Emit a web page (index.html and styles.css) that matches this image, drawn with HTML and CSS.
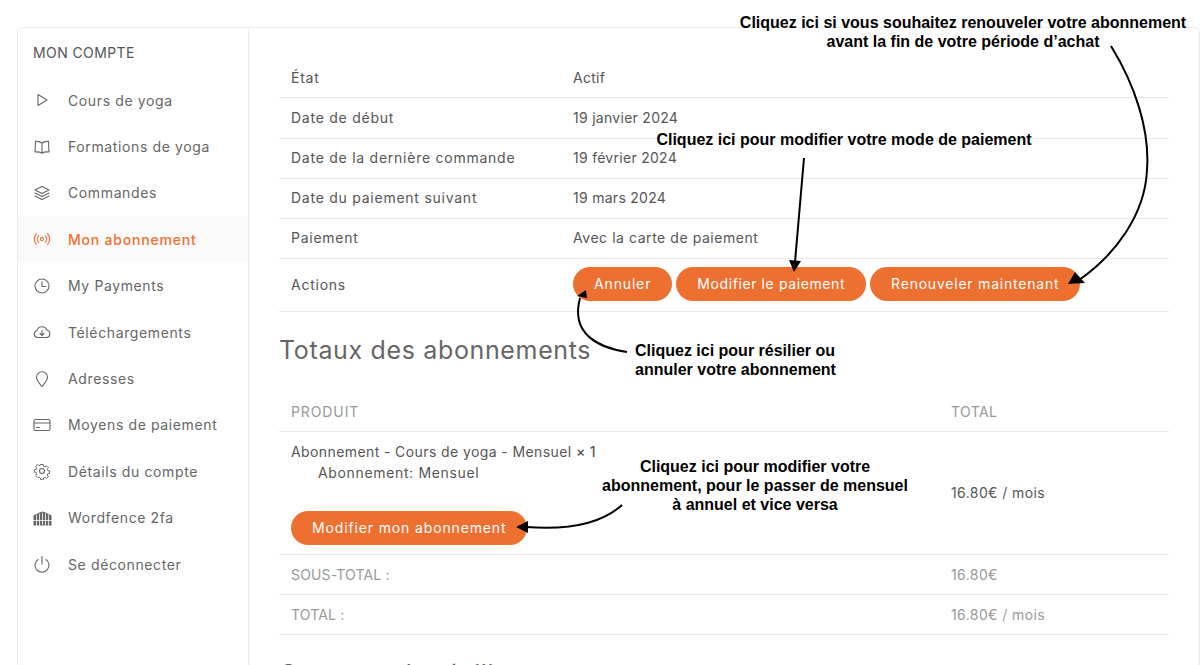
FILE: index.html
```html
<!DOCTYPE html>
<html lang="fr">
<head>
  <meta charset="UTF-8" />
  <title>Mon abonnement</title>
  <link rel="stylesheet" href="styles.css">
</head>
<body>

  <div class="page">
    <div class="account">

      <!-- Sidebar -->
      <aside class="sidebar">
        <h3>MON COMPTE</h3>
        <nav class="menu">
          <a href="#"><svg viewBox="0 0 18 18"><path d="M5 3.500 14 9l-9 5.500z"/></svg>Cours de yoga</a>
          <a href="#"><svg viewBox="0 0 18 18"><path d="M9 5C7.500 3.700 5 3.200 2.500 3.400L2 14c2.600-.3 5.200 0 7 1.200 1.800-1.200 4.400-1.500 7-1.200l-.5-10.600C13 3.200 10.500 3.700 9 5zM9 5v10"/></svg>Formations de yoga</a>
          <a href="#"><svg viewBox="0 0 18 18"><path d="M9 2.500 16 6 9 9.500 2 6zM2 9l7 3.500L16 9M2 12l7 3.500 7-3.500"/></svg>Commandes</a>
          <a href="#" class="active"><svg viewBox="0 0 18 18"><circle cx="9" cy="9" r="1.600"/><path d="M5.800 5.600a5 5 0 0 0 0 6.800M12.200 5.600a5 5 0 0 1 0 6.800M3.400 3.600a8 8 0 0 0 0 10.800M14.600 3.600a8 8 0 0 1 0 10.800"/></svg>Mon abonnement</a>
          <a href="#"><svg viewBox="0 0 18 18"><circle cx="9" cy="9" r="7"/><path d="M9 4.800V9.500h3.600"/></svg>My Payments</a>
          <a href="#"><svg viewBox="0 0 18 18"><path d="M5 14.500H4.500a3.400 3.400 0 0 1-.6-6.700A5.200 5.200 0 0 1 13.800 7a3.800 3.800 0 0 1-.3 7.500zM9 7.500v5M6.900 10.400 9 12.500l2.100-2.100"/></svg>Téléchargements</a>
          <a href="#"><svg viewBox="0 0 18 18"><path d="M9 16.500C6.500 13.500 3.500 10.500 3.500 7.300a5.500 5.500 0 0 1 11 0c0 3.200-3 6.200-5.500 9.200z"/></svg>Adresses</a>
          <a href="#"><svg viewBox="0 0 18 18"><rect x="1" y="3.500" width="16" height="11" rx="1.500"/><path d="M1 7h16M3.500 11.500h3"/></svg>Moyens de paiement</a>
          <a href="#"><svg viewBox="0 0 18 18"><circle cx="9" cy="9" r="2.500"/><path d="M7.600 1.800h2.800l.4 2.100 1.400.6 1.800-1.200 2 2-1.200 1.800.6 1.400 2 .4v2.800l-2 .4-.6 1.400 1.200 1.800-2 2-1.800-1.200-1.400.6-.4 2H7.600l-.4-2-1.400-.6L4 15.900l-2-2 1.200-1.800-.6-1.400-2-.4V7.500l2-.4.600-1.400L2 3.900l2-2 1.800 1.200 1.400-.6z" transform="translate(.9 .9) scale(.9)"/></svg>Détails du compte</a>
          <a href="#"><svg viewBox="0 0 18 18" class="solid"><path d="M0 6.500 3 5l3-1.500L9 2.500l3 1 3 1.500 3 1.500V16.500H0z"/><path class="cut" d="M3 6v10.500M6 5v11.500M9 4v11.500M12 5v11.500M15 6v10.500M0 11.500h18"/></svg>Wordfence 2fa</a>
          <a href="#"><svg viewBox="0 0 18 18"><path d="M9 1.500V9M5 4.500a7 7 0 1 0 8 0"/></svg>Se déconnecter</a>
        </nav>
      </aside>

      <!-- Subscription details -->
      <main class="content">
        <table class="details">
          <tr><td>État</td><td>Actif</td></tr>
          <tr><td>Date de début</td><td>19 janvier 2024</td></tr>
          <tr><td>Date de la dernière commande</td><td>19 février 2024</td></tr>
          <tr><td>Date du paiement suivant</td><td>19 mars 2024</td></tr>
          <tr><td>Paiement</td><td>Avec la carte de paiement</td></tr>
          <tr class="actions">
            <td>Actions</td>
            <td>
              <div class="btn-row">
                <a href="#" class="btn btn-cancel">Annuler</a>
                <a href="#" class="btn btn-pay">Modifier le paiement</a>
                <a href="#" class="btn btn-renew">Renouveler maintenant</a>
              </div>
            </td>
          </tr>
        </table>

        <h2>Totaux des abonnements</h2>

        <table class="totals">
          <thead>
            <tr><th>PRODUIT</th><th>TOTAL</th></tr>
          </thead>
          <tbody>
            <tr class="product">
              <td>
                Abonnement - Cours de yoga - Mensuel <span class="qty">× 1</span>
                <div class="variation">Abonnement: Mensuel</div>
                <a href="#" class="btn btn-change">Modifier mon abonnement</a>
              </td>
              <td>16.80€ / mois</td>
            </tr>
          </tbody>
          <tfoot>
            <tr><th>SOUS-TOTAL :</th><td>16.80€</td></tr>
            <tr><th>TOTAL :</th><td>16.80€ / mois</td></tr>
          </tfoot>
        </table>

        <h2 class="next">Comment le résilier</h2>
      </main>
    </div>

    <!-- Annotations drawn over the page -->
    <svg class="arrows" viewBox="0 0 1200 665">
      <path d="M1111 46C1135 85 1150 130 1147 170 1145 215 1115 255 1079 280"/>
      <path class="head" d="M1068 284 1075 272 1085 283z"/>
      <path d="M804 158 795 262"/>
      <path class="head" d="M794 272 789 260 801 261z"/>
      <path d="M627 352C600 348 570 335 580 298"/>
      <path class="head" d="M586 290 577 296 587 298z"/>
      <path d="M622 505C600 525 565 530 526 527"/>
      <path class="head" d="M516 527 528 521 528 533z"/>
    </svg>
    <p class="note note-renew">Cliquez ici si vous souhaitez renouveler votre abonnement<br>avant la fin de votre période d’achat</p>
    <p class="note note-pay">Cliquez ici pour modifier votre mode de paiement</p>
    <p class="note note-cancel">Cliquez ici pour résilier ou<br>annuler votre abonnement</p>
    <p class="note note-change">Cliquez ici pour modifier votre<br>abonnement, pour le passer de mensuel<br>à annuel et vice versa</p>
  </div>

</body>
</html>
```

FILE: styles.css
```css
/* === Body === */
html, body {
  margin: 0;
  height: 665px;
  overflow: hidden;
  background: #ffffff;
}

body {
  font-family: Inter, 'Open Sans', Arial, sans-serif;
  font-size: 14px;
  color: #555555;
}

.page {
  position: relative;
  height: 665px;
  padding: 27px 0 0 17px;
  box-sizing: border-box;
  overflow: hidden;
}

/* === Card === */
.account {
  display: flex;
  height: 700px;
  border: 1px solid #ececec;
  border-radius: 6px;
  box-sizing: border-box;
}

/* === Sidebar === */
.sidebar {
  width: 231px;
  flex-shrink: 0;
  border-right: 1px solid #ececec;
  box-sizing: border-box;
}

.sidebar h3 {
  margin: 0;
  height: 49px;
  padding: 16px 0 0 15px;
  box-sizing: border-box;
  font-size: 14px;
  font-weight: 400;
  line-height: 18px;
  letter-spacing: 0.4px;
  color: #555555;
}

.menu a {
  display: flex;
  align-items: center;
  gap: 17px;
  height: 46.4px;
  padding-left: 15px;
  color: #666666;
  text-decoration: none;
  letter-spacing: 0.62px;
}

.menu a svg {
  width: 18px;
  height: 18px;
  fill: none;
  stroke: #666666;
  stroke-width: 1.1;
  stroke-linejoin: round;
  stroke-linecap: round;
  flex-shrink: 0;
}

.menu a svg.solid {
  width: 19px;
  margin-right: -1px;
  fill: #666666;
  stroke: none;
}

.menu a svg.solid .cut {
  fill: none;
  stroke: #ffffff;
  stroke-width: 0.8;
}

.menu a.active {
  background: #fafafa;
  color: #ee7030;
  font-weight: 500;
  letter-spacing: 0.8px;
}

.menu a.active svg {
  stroke: #ee7030;
}

/* === Content === */
.content {
  flex: 1;
  padding: 29px 30px 0 30px;
  min-width: 0;
}

table {
  width: 100%;
  border-collapse: collapse;
  table-layout: fixed;
}

td, th {
  padding: 0 12px;
  text-align: left;
  font-weight: 400;
  letter-spacing: 0.4px;
  border-bottom: 1px solid #e8e8e8;
}

.details td {
  height: 40px;
  box-sizing: border-box;
  letter-spacing: 0.28px;
  padding-bottom: 1px;
}

.details td:first-child {
  width: 282px;
  letter-spacing: 0.75px;
}

.details tr:first-child td {
  padding-top: 2px;
  padding-bottom: 0;
}

.details tr:nth-child(2) td {
  height: 41px;
  padding-bottom: 0;
}

.details tr:nth-child(5) td:last-child {
  letter-spacing: 0.55px;
}

.details .actions td {
  height: 53px;
  padding-bottom: 2px;
}

.details .actions td:first-child {
  padding-bottom: 0;
}

/* === Buttons === */
.btn-row {
  display: flex;
  gap: 4px;
}

.btn {
  display: inline-block;
  height: 34px;
  line-height: 34px;
  padding: 0 21px;
  border-radius: 17px;
  background: #ee7030;
  color: #ffffff;
  text-decoration: none;
  letter-spacing: 0.72px;
  white-space: nowrap;
}

.btn-cancel {
  letter-spacing: 0.85px;
}

.btn-pay {
  letter-spacing: 0.6px;
}

.btn-renew {
  letter-spacing: 0.78px;
}

.btn-change {
  letter-spacing: 0.86px;
}

/* === Totals === */
h2 {
  margin: 22px 0 0;
  height: 58px;
  font-size: 25px;
  font-weight: 400;
  line-height: 32px;
  letter-spacing: 0.65px;
  color: #666666;
}

.totals thead th {
  height: 39px;
  color: #999999;
}

.totals thead th:first-child {
  letter-spacing: 0.9px;
}

.totals td:last-child,
.totals th:last-child {
  width: 206px;
}

.totals tfoot th,
.totals tfoot td {
  height: 39px;
  color: #999999;
}

.totals tfoot th {
  letter-spacing: 0.15px;
}

.product td {
  height: 123px;
  box-sizing: border-box;
}

.product td:first-child {
  padding-top: 11px;
  padding-bottom: 9px;
  vertical-align: top;
  line-height: 18px;
}

.qty {
  font-weight: 500;
}

.variation {
  margin: 3px 0 29px 27px;
  letter-spacing: 0.65px;
}

h2.next {
  margin-top: 23px;
}

/* === Annotations === */
.arrows {
  position: absolute;
  left: 0;
  top: 0;
  width: 1200px;
  height: 665px;
  fill: none;
  stroke: #000000;
  stroke-width: 2;
}

.arrows .head {
  fill: #000000;
  stroke: none;
}

.note {
  position: absolute;
  margin: 0;
  font-family: 'Liberation Sans', Arial, sans-serif;
  font-size: 16px;
  font-weight: 700;
  line-height: 19px;
  color: #000000;
  text-align: center;
  white-space: nowrap;
}

.note-renew {
  left: 663px;
  width: 600px;
  top: 13px;
}

.note-pay {
  left: 544px;
  width: 600px;
  top: 130px;
}

.note-cancel {
  left: 635px;
  width: 200px;
  top: 341px;
}

.note-change {
  left: 555px;
  width: 400px;
  top: 457px;
}
```
